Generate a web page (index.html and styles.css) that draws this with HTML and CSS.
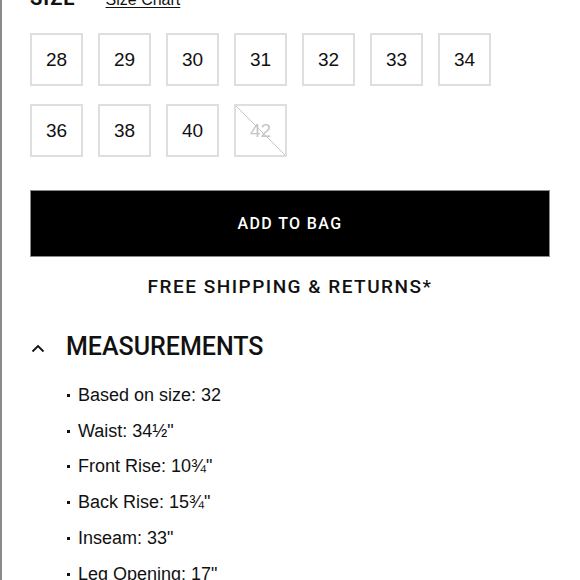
FILE: index.html
```html
<!DOCTYPE html>
<html lang="en">
<head>
<meta charset="utf-8">
<title>Size</title>
<link rel="stylesheet" href="styles.css">
</head>
<body>
<div class="page">
  <div class="size-head">
    <span class="size-label">SIZE</span>
    <a class="size-chart" href="#">Size Chart</a>
  </div>
  <div class="sizes">
    <div class="size">28</div>
    <div class="size">29</div>
    <div class="size">30</div>
    <div class="size">31</div>
    <div class="size">32</div>
    <div class="size">33</div>
    <div class="size">34</div>
    <div class="size">36</div>
    <div class="size">38</div>
    <div class="size">40</div>
    <div class="size size-out">42</div>
  </div>
  <button class="add">ADD TO BAG</button>
  <div class="shipping">FREE SHIPPING &amp; RETURNS*</div>
  <div class="acc-head">
    <svg class="chev" width="14" height="9" viewBox="0 0 14 9"><polyline points="1.5,7.5 7,2 12.5,7.5" fill="none" stroke="#111" stroke-width="1.8"/></svg>
    <span class="acc-title">MEASUREMENTS</span>
  </div>
  <ul class="meas">
    <li>Based on size: 32</li>
    <li>Waist: 34½"</li>
    <li>Front Rise: 10¾"</li>
    <li>Back Rise: 15¾"</li>
    <li>Inseam: 33"</li>
    <li>Leg Opening: 17"</li>
  </ul>
</div>
</body>
</html>
```

FILE: styles.css
```css
html, body {
  margin: 0;
  padding: 0;
  background: #fff;
}
body {
  font-family: "Liberation Sans", Arial, sans-serif;
  color: #111;
  overflow: hidden;
}
.page {
  border-left: 2px solid #8a8a8a;
  padding: 0 28px 0 28px;
  height: 580px;
  box-sizing: border-box;
  overflow: hidden;
}
.size-head {
  display: flex;
  align-items: baseline;
  gap: 30px;
  margin-top: -12px;
  height: 20px;
  line-height: 20px;
}
.size-label {
  font-family: Roboto, "Liberation Sans", sans-serif;
  font-weight: 700;
  font-size: 20px;
  letter-spacing: 1px;
}
.size-chart {
  font-size: 16px;
  color: #111;
  text-decoration: underline;
  text-underline-offset: 2px;
}
.sizes {
  margin-top: 25px;
  display: grid;
  grid-template-columns: repeat(7, 53px);
  grid-auto-rows: 53px;
  column-gap: 15px;
  row-gap: 18px;
}
.size {
  box-sizing: border-box;
  border: 2px solid #dedede;
  display: flex;
  align-items: center;
  justify-content: center;
  font-size: 19px;
  padding-top: 1px;
  color: #111;
}
.size-out {
  color: #c6c6c6;
  background: linear-gradient(to bottom left, transparent calc(50% - 0.7px), #c4c4c4 calc(50% - 0.7px), #c4c4c4 calc(50% + 0.7px), transparent calc(50% + 0.7px));
}
.add {
  display: block;
  margin-top: 33px;
  width: 520px;
  height: 67px;
  box-sizing: border-box;
  background: #000;
  border: 1px solid #8a8a8a;
  color: #fff;
  font-family: Roboto, "Liberation Sans", sans-serif;
  font-weight: 500;
  font-size: 16px;
  letter-spacing: 1.4px;
  padding: 0;
}
.shipping {
  margin-top: 18px;
  width: 520px;
  text-align: center;
  font-family: Roboto, "Liberation Sans", sans-serif;
  font-weight: 500;
  font-size: 19px;
  line-height: 24px;
  letter-spacing: 1.5px;
  color: #111;
}
.acc-head {
  margin-top: 33px;
  display: flex;
  align-items: center;
  height: 30px;
}
.chev {
  margin-left: 1px;
  margin-right: 21px;
  margin-top: 2px;
}
.acc-title {
  font-family: Roboto, "Liberation Sans", sans-serif;
  font-weight: 500;
  font-size: 25px;
  line-height: 30px;
  letter-spacing: 0;
  color: #111;
}
.meas {
  list-style: none;
  margin: 16px 0 0 0;
  padding: 0 0 0 48px;
  font-size: 18px;
  line-height: 35.7px;
  color: #111;
}
.meas li::before {
  content: "";
  display: inline-block;
  width: 3px;
  height: 3px;
  background: #111;
  margin-left: -11px;
  margin-right: 8px;
  vertical-align: 4px;
}
```
